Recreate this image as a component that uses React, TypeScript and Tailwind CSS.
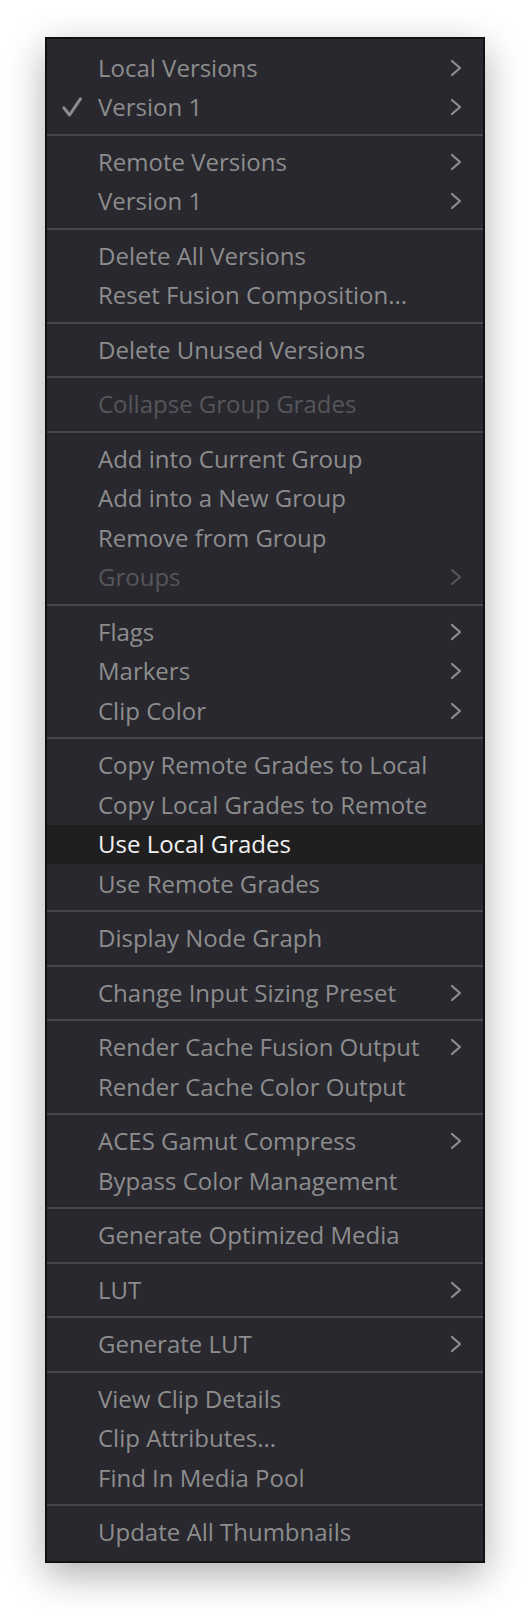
import { Fragment } from "react";

type Item = {
  label: string;
  checked?: boolean;
  submenu?: boolean;
  disabled?: boolean;
  active?: boolean;
};

// groups are split by separators
const groups: Item[][] = [
  [
    { label: "Local Versions", submenu: true },
    { label: "Version 1", checked: true, submenu: true },
  ],
  [
    { label: "Remote Versions", submenu: true },
    { label: "Version 1", submenu: true },
  ],
  [{ label: "Delete All Versions" }, { label: "Reset Fusion Composition..." }],
  [{ label: "Delete Unused Versions" }],
  [{ label: "Collapse Group Grades", disabled: true }],
  [
    { label: "Add into Current Group" },
    { label: "Add into a New Group" },
    { label: "Remove from Group" },
    { label: "Groups", submenu: true, disabled: true },
  ],
  [
    { label: "Flags", submenu: true },
    { label: "Markers", submenu: true },
    { label: "Clip Color", submenu: true },
  ],
  [
    { label: "Copy Remote Grades to Local" },
    { label: "Copy Local Grades to Remote" },
    { label: "Use Local Grades", active: true },
    { label: "Use Remote Grades" },
  ],
  [{ label: "Display Node Graph" }],
  [{ label: "Change Input Sizing Preset", submenu: true }],
  [
    { label: "Render Cache Fusion Output", submenu: true },
    { label: "Render Cache Color Output" },
  ],
  [
    { label: "ACES Gamut Compress", submenu: true },
    { label: "Bypass Color Management" },
  ],
  [{ label: "Generate Optimized Media" }],
  [{ label: "LUT", submenu: true }],
  [{ label: "Generate LUT", submenu: true }],
  [
    { label: "View Clip Details" },
    { label: "Clip Attributes..." },
    { label: "Find In Media Pool" },
  ],
  [{ label: "Update All Thumbnails" }],
];

function Check() {
  return (
    <svg width="20" height="20" viewBox="0 0 20 20" fill="none">
      <path
        d="M1.8 10.8 L7.6 18 L18.4 1.8"
        stroke="currentColor"
        strokeWidth="3"
        strokeLinecap="round"
        strokeLinejoin="round"
      />
    </svg>
  );
}

function Chevron() {
  return (
    <svg width="12" height="18" viewBox="0 0 12 18" fill="none">
      <path
        d="M2 2 L10 9 L2 16"
        stroke="currentColor"
        strokeWidth="2.3"
        strokeLinecap="round"
        strokeLinejoin="round"
      />
    </svg>
  );
}

function Row({ item }: { item: Item }) {
  const color = item.disabled
    ? "text-[#55565a]"
    : item.active
      ? "text-[#f2f2f2] bg-[#1f1f20]"
      : "text-[#8d8d8e]";
  return (
    <div className={`flex h-[39.5px] items-center ${color}`}>
      <div className="flex w-[51px] shrink-0 items-center pl-[15px] text-[#8d8d8e]">
        {item.checked && <Check />}
      </div>
      <span className="flex-1 whitespace-nowrap text-[24px] leading-none">
        {item.label}
      </span>
      <div className="flex w-[36px] shrink-0 items-center pl-[3px]">
        {item.submenu && <Chevron />}
      </div>
    </div>
  );
}

export default function App() {
  return (
    <div
      className="min-h-screen bg-white pl-[45px] pt-[37px]"
      style={{ fontFamily: '"Open Sans", "Noto Sans", sans-serif' }}
    >
      <div className="w-[440px] border-2 border-[#111112] bg-[#28282e] pb-[9px] pt-[9px] shadow-[0_12px_36px_rgba(0,0,0,0.32)]">
        {groups.map((group, gi) => (
          <Fragment key={gi}>
            {gi > 0 && <div className="my-[6.5px] h-[2px] bg-[#46474c]" />}
            {group.map((item, i) => (
              <Row key={i} item={item} />
            ))}
          </Fragment>
        ))}
      </div>
    </div>
  );
}
